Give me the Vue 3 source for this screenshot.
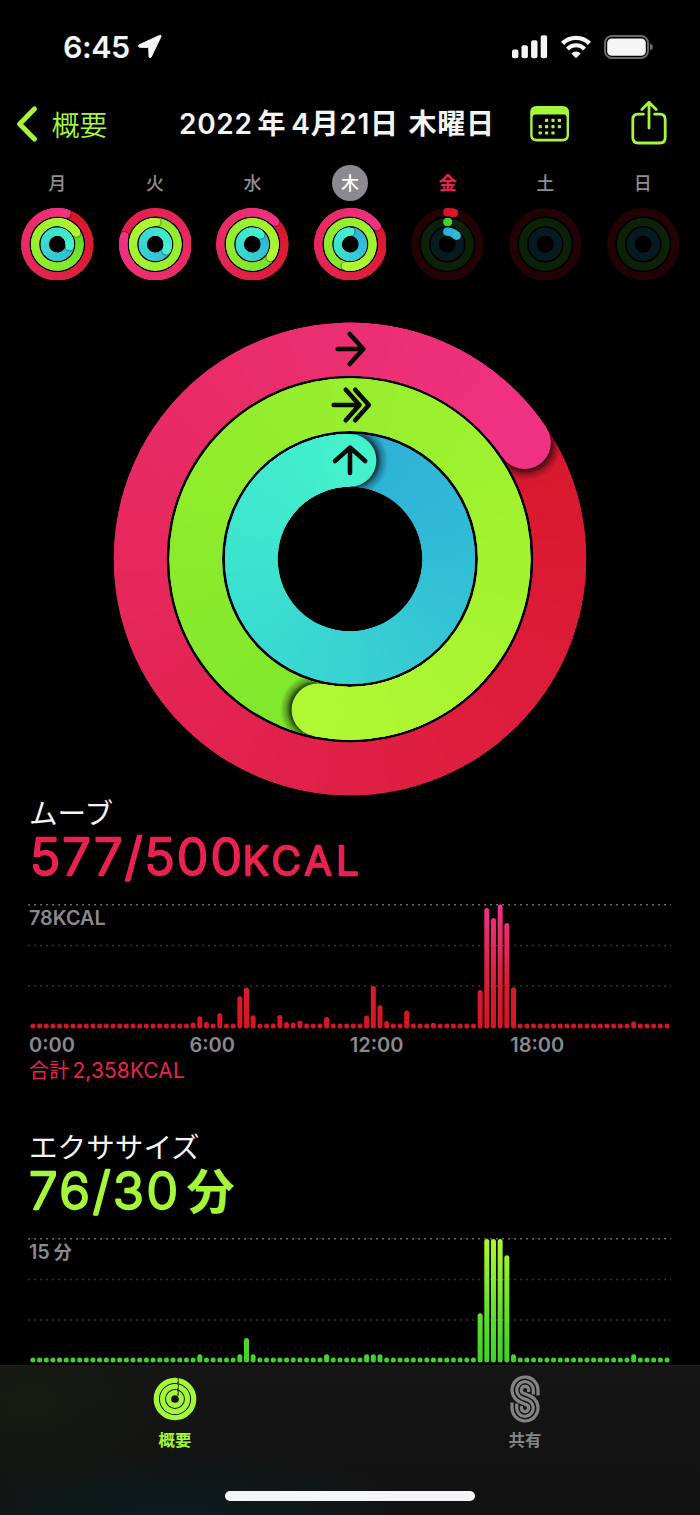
<template>
  <div class="screen">
    <header class="status-bar">
      <div class="status-left">
        <span class="clock">6:45</span>
        <svg class="location" width="26" height="26" viewBox="0 0 26 26">
          <path d="M22.6 1.4 L2.2 10.8 Q.6 12.4 2.4 13.2 L10.6 13.5 Q11.7 13.6 11.8 14.7 L12 22.8 Q12.8 24.8 14.2 23 L24 2.6 Q24.3 .8 22.6 1.4 Z" />
        </svg>
      </div>
      <div class="status-right">
        <svg width="36" height="24" viewBox="0 0 36 24" fill="#f5f5f5">
          <rect x="0" y="14.4" width="6.4" height="8.8" rx="2" />
          <rect x="9.5" y="10.2" width="6.4" height="13" rx="2" />
          <rect x="19.1" y="5.2" width="6.4" height="18" rx="2" />
          <rect x="28.7" y="0.2" width="6.4" height="23" rx="2" />
        </svg>
        <svg width="30" height="24" viewBox="0 0 30 24" fill="none" stroke="#f5f5f5" stroke-width="4.4">
          <path d="M1.5 8.4 A19.3 19.3 0 0 1 28.5 8.4" />
          <path d="M6.4 14 A12 12 0 0 1 23.6 14" stroke-width="4" />
          <path d="M15 23.2 L10.3 18.4 A6.8 6.8 0 0 1 19.7 18.4 Z" fill="#f5f5f5" stroke="none" />
        </svg>
        <svg width="50" height="24" viewBox="0 0 50 24">
          <rect x="1" y="1" width="43" height="22" rx="7" fill="none" stroke="#6a6a6a" stroke-width="2" />
          <rect x="3.2" y="3.4" width="38.6" height="17.4" rx="4.6" fill="#f5f5f5" />
          <path d="M46 8.2 Q49 9.6 49 12 Q49 14.4 46 15.8 Z" fill="#6a6a6a" />
        </svg>
      </div>
    </header>

    <nav class="nav-bar">
      <div class="back">
        <svg width="22" height="36" viewBox="0 0 22 36">
          <path d="M18.4 3 L3.6 18 L18.4 33" />
        </svg>
        <span>概要</span>
      </div>
      <h1 class="title">2022<span class="gap">年</span>4月21日 木曜日</h1>
      <svg class="calendar" width="40" height="36" viewBox="0 0 40 36">
        <path fill-rule="evenodd" d="M6.5 0 H32.5 Q39 0 39 6.5 V29 Q39 35.4 32.5 35.4 H6.5 Q.2 35.4 .2 29 V6.5 Q.2 0 6.5 0 Z M5.5 8.6 Q2.6 8.6 2.6 11.4 V29 Q2.6 32.8 6.4 32.8 H32.6 Q36.6 32.8 36.6 29 V11.4 Q36.6 8.6 33.8 8.6 Z" />
        <rect v-for="(d, i) in calendarDots" :key="i" :x="d[0]" :y="d[1]" width="3.2" height="3.2" rx="0.8" />
      </svg>
      <svg class="share" width="36" height="46" viewBox="0 0 36 46">
        <path d="M12.4 14.2 H7 Q1.8 14.2 1.8 19.4 V37.6 Q1.8 43 7 43 H29 Q34.2 43 34.2 37.6 V19.4 Q34.2 14.2 29 14.2 H23.6" />
        <path d="M18 28 V2.6 M10.8 9.4 L18 2.2 L25.2 9.4" />
      </svg>
    </nav>

    <section class="week">
      <div v-for="day in days" :key="day.label" class="day">
        <span class="day-label" :class="day.state">{{ day.label }}</span>
        <ActivityRings class="mini-rings" :id="'d' + day.key" :size="72.6" :radii="[32.1, 22.3, 12.6]" :width="8.2" :ends="day.ends" :shade="0.45" />
      </div>
    </section>

    <section class="hero">
      <ActivityRings id="hero" :size="474" :radii="[209.8, 154.3, 98.7]" :width="52.7" :ends="[416.3, 552, 360]" :shade="0.75" arrows />
    </section>

    <section v-for="m in metrics" :key="m.key" class="metric" :class="m.key">
      <h2 class="metric-name">{{ m.name }}</h2>
      <svg class="metric-value" width="644" height="72" viewBox="0 0 644 72">
        <text v-for="t in m.value" :key="t.text" :x="t.x" y="47.4" :font-size="t.size" :textLength="t.length" :class="t.kind">{{ t.text }}</text>
      </svg>
      <div class="chart">
        <svg width="644" height="130" viewBox="0 0 644 130">
          <defs>
            <linearGradient :id="m.key + '-fill'" gradientUnits="userSpaceOnUse" x1="0" y1="128.6" x2="0" y2="4.6">
              <stop offset="0" :stop-color="m.colors[0]" />
              <stop offset="0.35" :stop-color="m.colors[1]" />
              <stop offset="1" :stop-color="m.colors[2]" />
            </linearGradient>
          </defs>
          <line v-for="(y, i) in [4.8, 45.4, 86]" :key="y" x1="0.3" :y1="y" x2="643" :y2="y" :class="['grid', { top: i === 0 }]" />
          <rect v-for="(b, i) in m.bars" :key="i" :x="2.4 + i * 6.675" :y="128.6 - b" width="5" :height="b" rx="2.5" :fill="`url(#${m.key}-fill)`" />
        </svg>
        <span class="chart-max">{{ m.max }}<i v-if="m.maxUnit">{{ m.maxUnit }}</i></span>
      </div>
      <div class="hours">
        <span v-for="h in ['0:00', '6:00', '12:00', '18:00']" :key="h">{{ h }}</span>
      </div>
      <p class="total">合計<b>{{ m.total }}</b></p>
    </section>

    <footer class="tab-bar">
      <div class="tab active">
        <svg width="44" height="48" viewBox="-22 -24 44 48" fill="none" stroke="#a4f73a">
          <circle r="18.7" stroke-width="5.3" />
          <circle r="12.5" stroke-width="5.1" />
          <circle r="6.4" stroke-width="5.1" />
          <path d="M3 -22 V-16 M3 -15.5 V-9.5 M3 -9.4 V-3.4" stroke="#151712" stroke-width="1.3" />
          <path d="M0 -18.7 H.6 M0 -12.5 H.6 M0 -6.4 H.4" stroke-width="4.8" stroke-linecap="round" />
        </svg>
        <span>概要</span>
      </div>
      <div class="tab">
        <svg width="44" height="48" viewBox="-22 -24 44 48" fill="none" stroke="#848484" stroke-width="3.2">
          <path v-for="s in stripes" :key="s" :d="s" />
        </svg>
        <span>共有</span>
      </div>
      <div class="home-indicator"></div>
    </footer>
  </div>
</template>

<script setup>
import { h } from 'vue'

// colour stops along each ring: move, exercise, stand
const RING_COLORS = [
  { track: '#210306', stops: [[0, '#d9152a'], [0.14, '#d9192d'], [0.43, '#df2045'], [0.65, '#e6285e'], [0.87, '#ec2f73'], [1, '#f03284']] },
  { track: '#0c2107', stops: [[0, '#40d42b'], [0.35, '#80e72d'], [0.5, '#8deb2d'], [0.82, '#a3f330'], [1, '#b1f834']] },
  { track: '#071a20', stops: [[0, '#2eafd8'], [0.25, '#32bdd6'], [0.5, '#39d2d2'], [0.75, '#3de4ce'], [1, '#44f1cd']] },
]

function colorAt(stops, t) {
  const n = stops.findIndex((s) => s[0] >= t)
  if (n <= 0) return n === 0 ? stops[0][1] : stops[stops.length - 1][1]
  const [t0, c0] = stops[n - 1]
  const [t1, c1] = stops[n]
  const k = (t - t0) / (t1 - t0)
  const mix = [1, 3, 5].map((p) => {
    const a = parseInt(c0.slice(p, p + 2), 16)
    const b = parseInt(c1.slice(p, p + 2), 16)
    return Math.round(a + (b - a) * k)
  })
  return `rgb(${mix.join(',')})`
}

function point(r, deg) {
  const a = (deg * Math.PI) / 180
  return [(r * Math.sin(a)).toFixed(3), (-r * Math.cos(a)).toFixed(3)]
}

function segments(r, width, from, to, end, stops) {
  const step = r < 50 ? 6 : 2
  const list = []
  for (let a = from; a < to; a += step) {
    // every piece reaches under the next one so no seam shows
    const stop = Math.min(a + step * 2, to)
    const [x0, y0] = point(r, a)
    const [x1, y1] = point(r, stop)
    list.push(h('path', {
      d: `M${x0} ${y0}A${r} ${r} 0 0 1 ${x1} ${y1}`,
      fill: 'none',
      stroke: colorAt(stops, a / Math.max(end, 300)),
      'stroke-width': width,
    }))
  }
  return list
}

function ringShapes(id, r, width, end, { track, stops }, shade) {
  const half = width / 2
  const shapes = []
  if (end < 360) {
    shapes.push(h('circle', { r, fill: 'none', stroke: track, 'stroke-width': width }))
    if (!end) return shapes
    shapes.push(h('circle', { cx: 0, cy: -r, r: half, fill: stops[0][1] }))
    shapes.push(...segments(r, width, 0, end, end, stops))
    const [x, y] = point(r, end)
    shapes.push(h('circle', { cx: x, cy: y, r: half, fill: colorAt(stops, end / 300) }))
    return shapes
  }
  const outer = r + half
  const inner = r - half
  const circle = (q) => `M${-q} 0A${q} ${q} 0 1 1 ${q} 0A${q} ${q} 0 1 1 ${-q} 0Z`
  const [x, y] = point(r, end)
  const [sx, sy] = point(r, end + (half * 5) / r)
  shapes.push(h('clipPath', { id: id + '-clip' }, [h('path', { d: circle(outer) + circle(inner), 'clip-rule': 'evenodd' })]))
  shapes.push(h('radialGradient', { id: id + '-shadow' }, [
    h('stop', { offset: '0.68', 'stop-color': '#000', 'stop-opacity': shade }),
    h('stop', { offset: '0.82', 'stop-color': '#000', 'stop-opacity': shade * 0.4 }),
    h('stop', { offset: '1', 'stop-color': '#000', 'stop-opacity': 0 }),
  ]))
  shapes.push(h('g', { 'clip-path': `url(#${id}-clip)` }, [
    ...segments(r, width + 2, end - 360, end, end, stops),
    h('circle', { cx: sx, cy: sy, r: half * 1.36, fill: `url(#${id}-shadow)` }),
    ...segments(r, width + 2, end - 60, end, end, stops),
    h('circle', { cx: x, cy: y, r: half, fill: colorAt(stops, 1) }),
  ]))
  return shapes
}

function ActivityRings({ id, size, radii, width, ends, shade, arrows }) {
  const content = radii.flatMap((r, i) => ringShapes(`${id}-${i}`, r, width, ends[i], RING_COLORS[i], shade))
  if (arrows !== undefined) {
    content.push(h('path', {
      d: 'M-12.3 -210H13 M-.3 -225L13.3 -210L-.3 -195 M-16.3 -154H9.5 M-4.2 -169.2L9.5 -154L-4.2 -138.8 M5.2 -169.2L18.8 -154L5.2 -138.8 M0 -86V-111 M-15 -98L0 -111.4L15.2 -98',
      fill: 'none',
      stroke: '#050a05',
      'stroke-width': 4.6,
      'stroke-linecap': 'round',
      'stroke-linejoin': 'round',
    }))
  }
  return h('svg', { width: size, height: size, viewBox: `${-size / 2} ${-size / 2} ${size} ${size}` }, content)
}
ActivityRings.props = ['id', 'size', 'radii', 'width', 'ends', 'shade', 'arrows']

const days = [
  { key: 1, label: '月', ends: [377, 419, 460] },
  { key: 2, label: '火', ends: [645, 723, 480] },
  { key: 3, label: '水', ends: [406, 485, 400] },
  { key: 4, label: '木', ends: [416, 552, 360], state: 'selected' },
  { key: 5, label: '金', ends: [12, 2, 48], state: 'today' },
  { key: 6, label: '土', ends: [0, 0, 0] },
  { key: 7, label: '日', ends: [0, 0, 0] },
]

// one bar per 15 minutes
function quarterHours(peaks) {
  return Array.from({ length: 96 }, (_, i) => peaks[i] || 5)
}

const metrics = [
  {
    key: 'move',
    name: 'ムーブ',
    value: [
      { text: '577/500', x: 2, size: 51, length: 212, kind: 'digits' },
      { text: 'KCAL', x: 214.5, size: 40, length: 116, kind: 'digits' },
    ],
    max: '78KCAL',
    total: '2,358KCAL',
    colors: ['#d8141f', '#da1c31', '#f2328a'],
    bars: quarterHours({
      24: 6, 25: 12.3, 26: 6.5, 28: 15.3, 31: 32.3, 32: 41, 33: 13.3, 37: 13.5, 38: 6.5, 39: 6, 40: 8,
      44: 11.7, 50: 13, 51: 42.5, 52: 23.3, 53: 7.7, 56: 18, 60: 5.8, 67: 38.7, 68: 120.7, 69: 110.5,
      70: 124, 71: 105.5, 72: 41.3, 90: 7,
    }),
  },
  {
    key: 'exercise',
    name: 'エクササイズ',
    value: [
      { text: '76/30', x: 1, size: 51, length: 149, kind: 'digits' },
      { text: '分', x: 158.5, size: 48, length: 48, kind: 'unit' },
    ],
    max: '15',
    maxUnit: '分',
    total: '76分',
    colors: ['#3dd32b', '#5cdd2b', '#b0f733'],
    bars: quarterHours({
      25: 8.3, 31: 8.3, 32: 24.7, 33: 8.3, 44: 8.3, 50: 8.3, 51: 8.3, 52: 8.3, 67: 49.3,
      68: 123.7, 69: 123.7, 70: 123.7, 71: 107.3, 72: 8.3, 90: 8.3,
    }),
  },
]

const calendarDots = [
  [15, 12.8], [21.4, 12.8], [27.8, 12.8],
  [8.6, 19.1], [15, 19.1], [21.4, 19.1], [27.8, 19.1],
  [8.6, 25.4], [15, 25.4], [21.4, 25.4],
]

// parallel bands of the sharing "S": two arcs joined by their inner tangent
const stripes = [[13, 3.6, 3.5, 7], [8.3, 8.3, 4.6, 4.6], [3.6, 13, 7, 3.5]].map(([a, b, start, stop]) => {
  const c = 9
  const ny = (a + b) / (2 * c)
  const nx = Math.sqrt(1 - ny * ny)
  return `M${a} ${-start}V${-c}A${a} ${a} 0 1 0 ${-nx * a} ${-c + ny * a}L${nx * b} ${c - ny * b}A${b} ${b} 0 1 1 ${-b} ${c}V${stop}`
})
</script>

<style>
body {
  background: #000;
}
</style>

<style scoped>
.screen {
  position: relative;
  width: 700px;
  height: 1515px;
  overflow: hidden;
  background: #000;
  color: #f5f5f5;
  font-family: Inter, "Noto Sans CJK JP", sans-serif;
}

.status-bar {
  display: flex;
  justify-content: space-between;
  align-items: center;
  height: 94px;
  padding: 0 46px 0 63px;
  box-sizing: border-box;
}

.status-left,
.status-right {
  display: flex;
  align-items: center;
}

.status-left {
  gap: 7px;
}

.clock {
  font-size: 30.5px;
  font-weight: 600;
  letter-spacing: -0.5px;
  line-height: 40px;
}

.location {
  fill: #f5f5f5;
  stroke: #f5f5f5;
  stroke-linejoin: round;
}

.status-right {
  gap: 13px;
}

.nav-bar {
  display: flex;
  align-items: center;
  height: 60px;
  padding-left: 15.5px;
}

.back {
  display: flex;
  align-items: center;
  gap: 14px;
  width: 163.5px;
  color: #a4f73a;
  font-size: 28px;
  font-weight: 350;
}

.back path,
.share path {
  fill: none;
  stroke: #a4f73a;
  stroke-linecap: round;
  stroke-linejoin: round;
}

.back path {
  stroke-width: 5;
}

.share path {
  stroke-width: 2.8;
}

.title {
  width: 351px;
  margin: 0;
  font-size: 28px;
  font-weight: 600;
  letter-spacing: 0.7px;
  line-height: 40px;
  white-space: nowrap;
  word-spacing: 2px;
}

.gap {
  margin: 0 5px;
}

.calendar {
  fill: #a4f73a;
}

.share {
  margin: 0 0 2px 61px;
}

.week {
  display: grid;
  grid-template-columns: repeat(7, 97.6px);
  height: 168px;
  padding: 11px 0 0 8.5px;
  box-sizing: border-box;
}

.day {
  display: flex;
  flex-direction: column;
  align-items: center;
}

.day-label {
  width: 36px;
  height: 36px;
  border-radius: 50%;
  color: #8e8d93;
  font-size: 18px;
  font-weight: 500;
  line-height: 37.5px;
  text-align: center;
}

.day-label.selected {
  background: #8b8a90;
  color: #fff;
}

.day-label.today {
  color: #e8234f;
  font-weight: 700;
}

.mini-rings {
  margin-top: 6.7px;
}

.hero {
  display: flex;
  justify-content: center;
  height: 474px;
}

.metric {
  height: 333.7px;
  padding: 0 28px;
}

.move {
  color: #ea2250;
}

.exercise {
  color: #a4f73a;
}

.metric-name {
  height: 32px;
  margin: 0;
  padding-left: 1px;
  color: #f5f5f5;
  font-size: 28.6px;
  font-weight: 400;
  line-height: 36px;
}

.metric-value {
  display: block;
  height: 72px;
  overflow: visible;
}

.metric-value text {
  fill: currentColor;
}

.digits {
  font-weight: 300;
  stroke: currentColor;
  stroke-width: 2.4;
  stroke-linejoin: round;
}

.unit {
  font-weight: 700;
}

.chart {
  position: relative;
  height: 130px;
}

.grid {
  stroke: #48484a;
  stroke-width: 1.5;
  stroke-dasharray: 1.5 4.5;
}

.grid.top {
  stroke: #8c8c90;
}

.chart-max {
  position: absolute;
  left: 1px;
  top: 6px;
  color: #8a898f;
  font-size: 19.8px;
  font-weight: 600;
  line-height: 25px;
}

.chart-max i {
  margin-left: 4px;
  font-size: 18px;
  font-style: normal;
}

.hours {
  display: grid;
  grid-template-columns: repeat(4, 160.4px);
  padding-left: 1px;
  color: #8a898f;
  font-size: 20px;
  font-weight: 600;
  line-height: 30px;
}

.total {
  margin: 0;
  padding-left: 1px;
  font-size: 20px;
  letter-spacing: 0.2px;
  line-height: 22px;
}

.total b {
  margin-left: 3px;
  font-size: 20.8px;
  font-weight: 400;
}

.tab-bar {
  position: absolute;
  left: 0;
  right: 0;
  bottom: 0;
  display: grid;
  grid-template-columns: 1fr 1fr;
  height: 150px;
  padding-top: 9px;
  box-sizing: border-box;
  border-top: 1px solid #1c1c1c;
  background:
    radial-gradient(ellipse 260px 70px at 170px 155px, rgba(8, 38, 42, 0.6), transparent),
    radial-gradient(ellipse 170px 110px at 30px 40px, rgba(26, 34, 14, 0.5), transparent),
    linear-gradient(#151515, #111);
}

.tab {
  display: flex;
  flex-direction: column;
  align-items: center;
  color: #848484;
  font-size: 16.4px;
  font-weight: 700;
  line-height: 24px;
}

.tab span {
  margin-top: 5px;
}

.tab.active {
  color: #a4f73a;
}

.home-indicator {
  position: absolute;
  left: 225px;
  bottom: 14px;
  width: 250px;
  height: 10px;
  border-radius: 5px;
  background: #f5f4f6;
}
</style>
